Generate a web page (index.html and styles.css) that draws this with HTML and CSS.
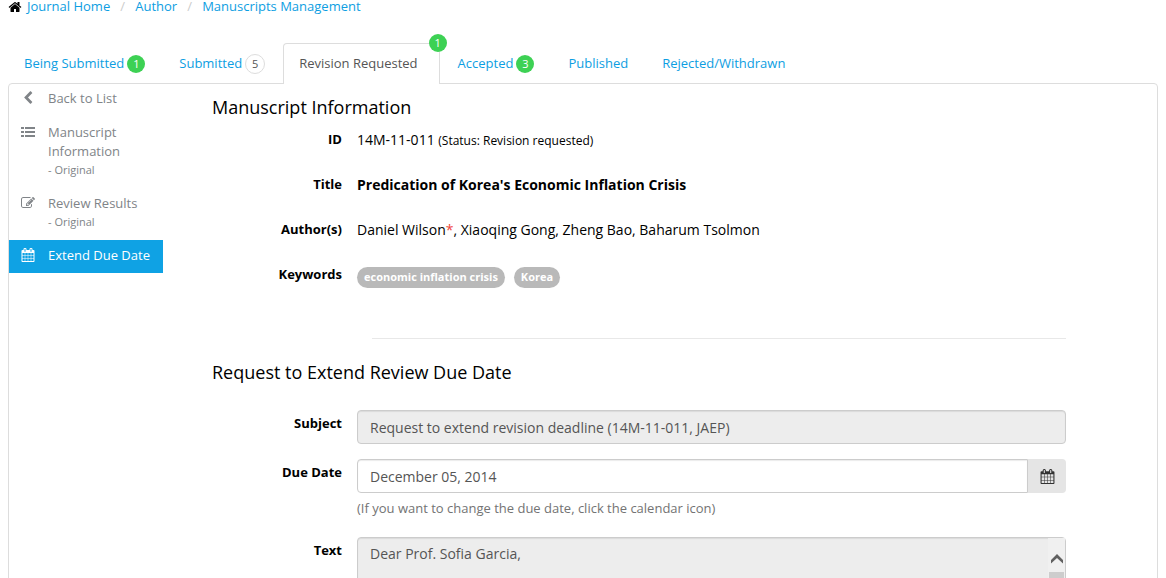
FILE: index.html
```html
<!DOCTYPE html>
<html lang="en">
<head>
<meta charset="utf-8">
<title>Manuscripts Management</title>
<link rel="stylesheet" href="styles.css">
</head>
<body>
<svg class="defs" aria-hidden="true">
  <symbol id="calendar" viewBox="0 0 1792 1792"><path d="M192 1664h288v-288h-288v288zm352 0h320v-288h-320v288zm-352-352h288v-320h-288v320zm352 0h320v-320h-320v320zm-352-384h288v-288h-288v288zm736 736h320v-288h-320v288zm-384-736h320v-288h-320v288zm768 736h288v-288h-288v288zm-384-352h320v-320h-320v320zm-352-864v-288q0-13-9.500-22.500t-22.500-9.500h-64q-13 0-22.500 9.500t-9.500 22.500v288q0 13 9.500 22.500t22.500 9.500h64q13 0 22.500-9.500t9.500-22.500zm736 864h288v-320h-288v320zm-384-384h320v-288h-320v288zm384 0h288v-288h-288v288zm32-480v-288q0-13-9.500-22.500t-22.500-9.500h-64q-13 0-22.500 9.500t-9.500 22.500v288q0 13 9.500 22.500t22.500 9.500h64q13 0 22.500-9.500t9.500-22.500zm384-64v1280q0 52-38 90t-90 38h-1408q-52 0-90-38t-38-90v-1280q0-52 38-90t90-38h128v-96q0-66 47-113t113-47h64q66 0 113 47t47 113v96h384v-96q0-66 47-113t113-47h64q66 0 113 47t47 113v96h128q52 0 90 38t38 90z"/></symbol>
</svg>

<nav class="breadcrumb" aria-label="Breadcrumb">
  <svg class="icon home" viewBox="0 0 1792 1792" aria-hidden="true"><path d="M1472 992v480q0 26-19 45t-45 19h-384v-384h-256v384h-384q-26 0-45-19t-19-45v-480q0-1 .5-3t.5-3l575-474 575 474q1 2 1 6zm223-69l-62 74q-8 9-21 11h-3q-13 0-21-7l-692-577-692 577q-12 8-24 7-13-2-21-11l-62-74q-8-10-7-23.500t11-21.500l719-599q32-26 76-26t76 26l244 204v-195q0-14 9-23t23-9h192q14 0 23 9t9 23v408l219 182q10 8 11 21.500t-7 23.500z"/></svg>
  <a href="#">Journal Home</a><span class="slash">/</span><a href="#">Author</a><span class="slash">/</span><a href="#">Manuscripts Management</a>
</nav>

<nav class="tabs" aria-label="Manuscript status">
  <a class="tab" href="#">Being Submitted <span class="badge">1</span></a>
  <a class="tab" href="#">Submitted <span class="badge plain">5</span></a>
  <a class="tab active" href="#" aria-current="page">Revision Requested <span class="badge corner">1</span></a>
  <a class="tab" href="#">Accepted <span class="badge">3</span></a>
  <a class="tab" href="#">Published</a>
  <a class="tab" href="#">Rejected/Withdrawn</a>
</nav>

<div class="panel">
  <nav class="side" aria-label="Manuscript">
    <a class="item" href="#">
      <svg class="icon" viewBox="0 0 1792 1792" aria-hidden="true"><path d="M1427 301l-531 531 531 531q19 19 19 45t-19 45l-166 166q-19 19-45 19t-45-19l-742-742q-19-19-19-45t19-45l742-742q19-19 45-19t45 19l166 166q19 19 19 45t-19 45z"/></svg>
      <span>Back to List</span>
    </a>
    <a class="item" href="#">
      <svg class="icon" viewBox="0 0 14 14" aria-hidden="true"><path d="M0 2h3v2H0zM4 2h10v2H4zM0 6h3v2H0zM4 6h10v2H4zM0 10h3v2H0zM4 10h10v2H4z"/></svg>
      <span>Manuscript Information<small>- Original</small></span>
    </a>
    <a class="item" href="#">
      <svg class="icon" viewBox="0 0 1792 1792" aria-hidden="true"><path d="M888 1184l116-116-152-152-116 116v56h96v96h56zm440-720q-16-16-33 1l-350 350q-17 17-1 33t33-1l350-350q17-17 1-33zm80 594v190q0 119-84.500 203.500t-203.500 84.500h-832q-119 0-203.500-84.500t-84.500-203.500v-832q0-119 84.500-203.500t203.500-84.500h832q63 0 117 25 15 7 18 23 3 17-9 29l-49 49q-14 14-32 8-23-6-45-6h-832q-66 0-113 47t-47 113v832q0 66 47 113t113 47h832q66 0 113-47t47-113v-126q0-13 9-22l64-64q15-15 35-7t20 29zm-96-738l288 288-672 672h-288v-288zm444 132l-92 92-288-288 92-92q28-28 68-28t68 28l152 152q28 28 28 68t-28 68z"/></svg>
      <span>Review Results<small>- Original</small></span>
    </a>
    <a class="item current" href="#" aria-current="page">
      <svg class="icon" aria-hidden="true"><use href="#calendar"/></svg>
      <span>Extend Due Date</span>
    </a>
  </nav>

  <main class="main">
    <h2>Manuscript Information</h2>
    <dl class="details">
      <dt>ID</dt><dd>14M-11-011 <span class="status">(Status: Revision requested)</span></dd>
      <dt>Title</dt><dd><b>Predication of Korea's Economic Inflation Crisis</b></dd>
      <dt>Author(s)</dt><dd>Daniel Wilson<span class="star">*</span>, Xiaoqing Gong, Zheng Bao, Baharum Tsolmon</dd>
      <dt>Keywords</dt><dd class="tags"><span class="tag">economic inflation crisis</span><span class="tag">Korea</span></dd>
    </dl>
    <hr>
    <h2>Request to Extend Review Due Date</h2>
    <form class="form">
      <label for="subject">Subject</label>
      <input class="control" id="subject" type="text" value="Request to extend revision deadline (14M-11-011, JAEP)" readonly>
      <label for="due">Due Date</label>
      <div>
        <div class="group">
          <input class="control" id="due" type="text" value="December 05, 2014">
          <button class="pick" type="button" aria-label="Choose date"><svg class="icon" aria-hidden="true"><use href="#calendar"/></svg></button>
        </div>
        <p class="help">(If you want to change the due date, click the calendar icon)</p>
      </div>
      <label for="text">Text</label>
      <div class="area">
        <textarea class="control" id="text" rows="10" readonly>Dear Prof. Sofia Garcia,</textarea>
        <div class="scroll" aria-hidden="true">
          <svg class="arrow" viewBox="0 0 12 10"><path d="M6 0l6 6v3.500L6 4 0 9.500V6z"/></svg>
          <div class="thumb"></div>
        </div>
      </div>
    </form>
  </main>
</div>
</body>
</html>
```
FILE: styles.css
```css
* { box-sizing: border-box; }
body {
  margin: 0 8px;
  font: 13px/19px "Open Sans", "Noto Sans", sans-serif;
  color: #000;
  background: #fff;
}
a { color: #0d9ee2; text-decoration: none; }
.defs { position: absolute; width: 0; height: 0; }
.icon { width: 14px; height: 14px; fill: currentColor; flex: none; }

.breadcrumb { display: flex; align-items: center; height: 13px; line-height: 13px; }
.home { margin-right: 5px; }
.slash { width: 25px; text-align: center; color: #ccc; }

.tabs { display: flex; align-items: flex-end; gap: 2px; padding-top: 30px; }
.tab {
  display: flex;
  align-items: center;
  gap: 3px;
  height: 40px;
  padding: 0 15px;
  border: 1px solid transparent;
  border-bottom: 0;
  border-radius: 4px 4px 0 0;
}
.active {
  position: relative;
  height: 41px;
  margin-bottom: -1px;
  padding: 0 21px 2px 15px;
  color: #555;
  background: #fff;
  border-color: #ddd;
}
.badge {
  width: 18px;
  height: 18px;
  border-radius: 50%;
  font-size: 11px;
  line-height: 18px;
  text-align: center;
  color: #fff;
  background: #3dd154;
}
.plain { width: 20px; height: 20px; color: #555; background: #fff; border: 1px solid #ddd; }
.corner { position: absolute; top: -10px; right: -8px; }

.panel { display: flex; border: 1px solid #ddd; border-radius: 4px; }
.side { flex: none; width: 154px; display: flex; flex-direction: column; gap: 1px; margin-top: -1px; }
.item { display: flex; gap: 13px; padding: 6px 12px 8px; color: #808488; }
.item .icon { margin-top: 2px; }
.item small { display: block; font-size: 11px; line-height: 18px; }
.current { color: #fff; background: #0fa2e4; }

.main { flex: 1; min-width: 0; margin-left: 49px; padding: 11px 91px 20px 0; }
h2 { margin: 0; font-size: 18px; font-weight: 400; line-height: 24px; }
dl, form { display: grid; grid-template-columns: 130px 1fr; column-gap: 15px; margin: 0; }
dt, label { font-weight: 700; text-align: right; }
.details { grid-auto-rows: 45px; margin-top: 11px; }
.details dd { margin: 0; font-size: 14px; line-height: 19px; }
.status { font-size: 12px; }
.star { color: #f0453a; }
.details .tags { display: flex; align-items: flex-start; gap: 9px; padding-top: 2px; }
.tag {
  padding: 0 7px 2px;
  border-radius: 11px;
  font-size: 11px;
  font-weight: 700;
  line-height: 19px;
  color: #fff;
  background: #b9b9b9;
}
hr { height: 1px; margin: 28px 0 21px 160px; border: 0; background: #e8e8e8; }

.form { row-gap: 15px; margin-top: 26px; }
.form label { padding-top: 4px; }
.control {
  display: block;
  width: 100%;
  height: 34px;
  padding: 6px 12px;
  border: 1px solid #ccc;
  border-radius: 4px;
  font: 14px/20px "Open Sans", "Noto Sans", sans-serif;
  color: #555;
  background: #fff;
  box-shadow: inset 0 1px 1px rgba(0, 0, 0, .08);
}
.control:read-only { background: #ededed; }
.group { display: flex; }
.group .control { flex: 1; border-radius: 4px 0 0 4px; }
.pick { width: 38px; padding: 0; border: 0; border-radius: 0 4px 4px 0; background: #e5e5e5; color: #333; }
.pick .icon { display: block; width: 15px; height: 15px; margin: 0 auto; }
.help { margin: 6px 0 4px; color: #737373; }
.area { position: relative; }
textarea.control { height: auto; resize: none; overflow: hidden; }
.scroll { position: absolute; top: 1px; right: 1px; bottom: 1px; width: 17px; background: #f0f0f0; }
.arrow { display: block; width: 12px; height: 10px; margin: 16px auto 8px; fill: #606060; }
.thumb { width: 15px; height: 120px; margin: 0 auto; background: #cdcdcd; }
```
